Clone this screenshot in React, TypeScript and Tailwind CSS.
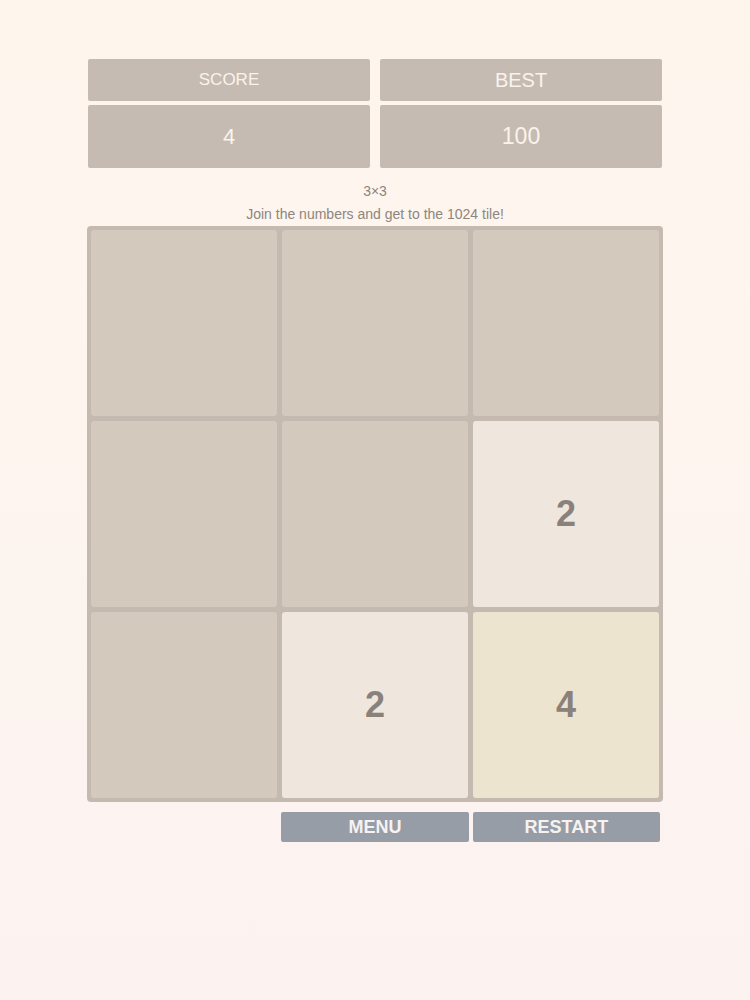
// 2048 (3x3) game screen: score header, board, action buttons.

type Cell = number | null;

const board: Cell[] = [null, null, null, null, null, 2, null, 2, 4];

function tileClass(v: Cell) {
  if (v === 2) return 'bg-[#efe7de]';
  if (v === 4) return 'bg-[#ede4d0]';
  return 'bg-[#d4c9bd]';
}

function ScoreBox({
  label,
  value,
  labelSize,
  valueSize,
}: {
  label: string;
  value: string;
  labelSize: string;
  valueSize: string;
}) {
  return (
    <div className="flex flex-1 flex-col gap-[4px]">
      <div
        className={`flex h-[42px] items-center justify-center rounded-[2px] bg-[#c6bbb2] text-[#faf3ec] ${labelSize}`}
      >
        {label}
      </div>
      <div
        className={`flex h-[63px] items-center justify-center rounded-[2px] bg-[#c6bbb2] text-[#faf3ec] ${valueSize}`}
      >
        {value}
      </div>
    </div>
  );
}

export default function App() {
  return (
    <div
      className="min-h-[1000px] w-full bg-gradient-to-b from-[#fef6ed] to-[#fcf3f1] pt-[59px]"
      style={{ fontFamily: '"Liberation Sans", Arial, sans-serif' }}
    >
      <div className="mx-auto w-[576px]">
        {/* Score header */}
        <div className="flex gap-[10px] px-px">
          <ScoreBox label="SCORE" value="4" labelSize="text-[17px]" valueSize="text-[22px]" />
          <ScoreBox label="BEST" value="100" labelSize="text-[20px]" valueSize="text-[23px]" />
        </div>

        <div className="mt-[14px] flex flex-col items-center text-[#8d8580]">
          <div className="h-[18px] text-[14px] leading-[18px]">3×3</div>
          <div className="mt-[4px] h-[20px] text-[14px] leading-[20px]">
            Join the numbers and get to the 1024 tile!
          </div>
        </div>

        {/* Board */}
        <div className="mt-[2px] grid grid-cols-3 gap-[5px] rounded-[4px] bg-[#c5baaf] p-[4px]">
          {board.map((v, i) => (
            <div
              key={i}
              className={`flex h-[186px] items-center justify-center rounded-[3px] text-[36px] font-bold text-[#8a817a] ${tileClass(v)}`}
            >
              {v ?? ''}
            </div>
          ))}
        </div>

        {/* Actions */}
        <div className="mt-[10px] grid grid-cols-3 gap-[4px] px-[3px]">
          <div />
          <button className="h-[30px] rounded-[2px] bg-[#969da7] text-[18px] font-semibold text-[#f5f2ef]">
            MENU
          </button>
          <button className="h-[30px] rounded-[2px] bg-[#969da7] text-[18px] font-semibold text-[#f5f2ef]">
            RESTART
          </button>
        </div>
      </div>
    </div>
  );
}
